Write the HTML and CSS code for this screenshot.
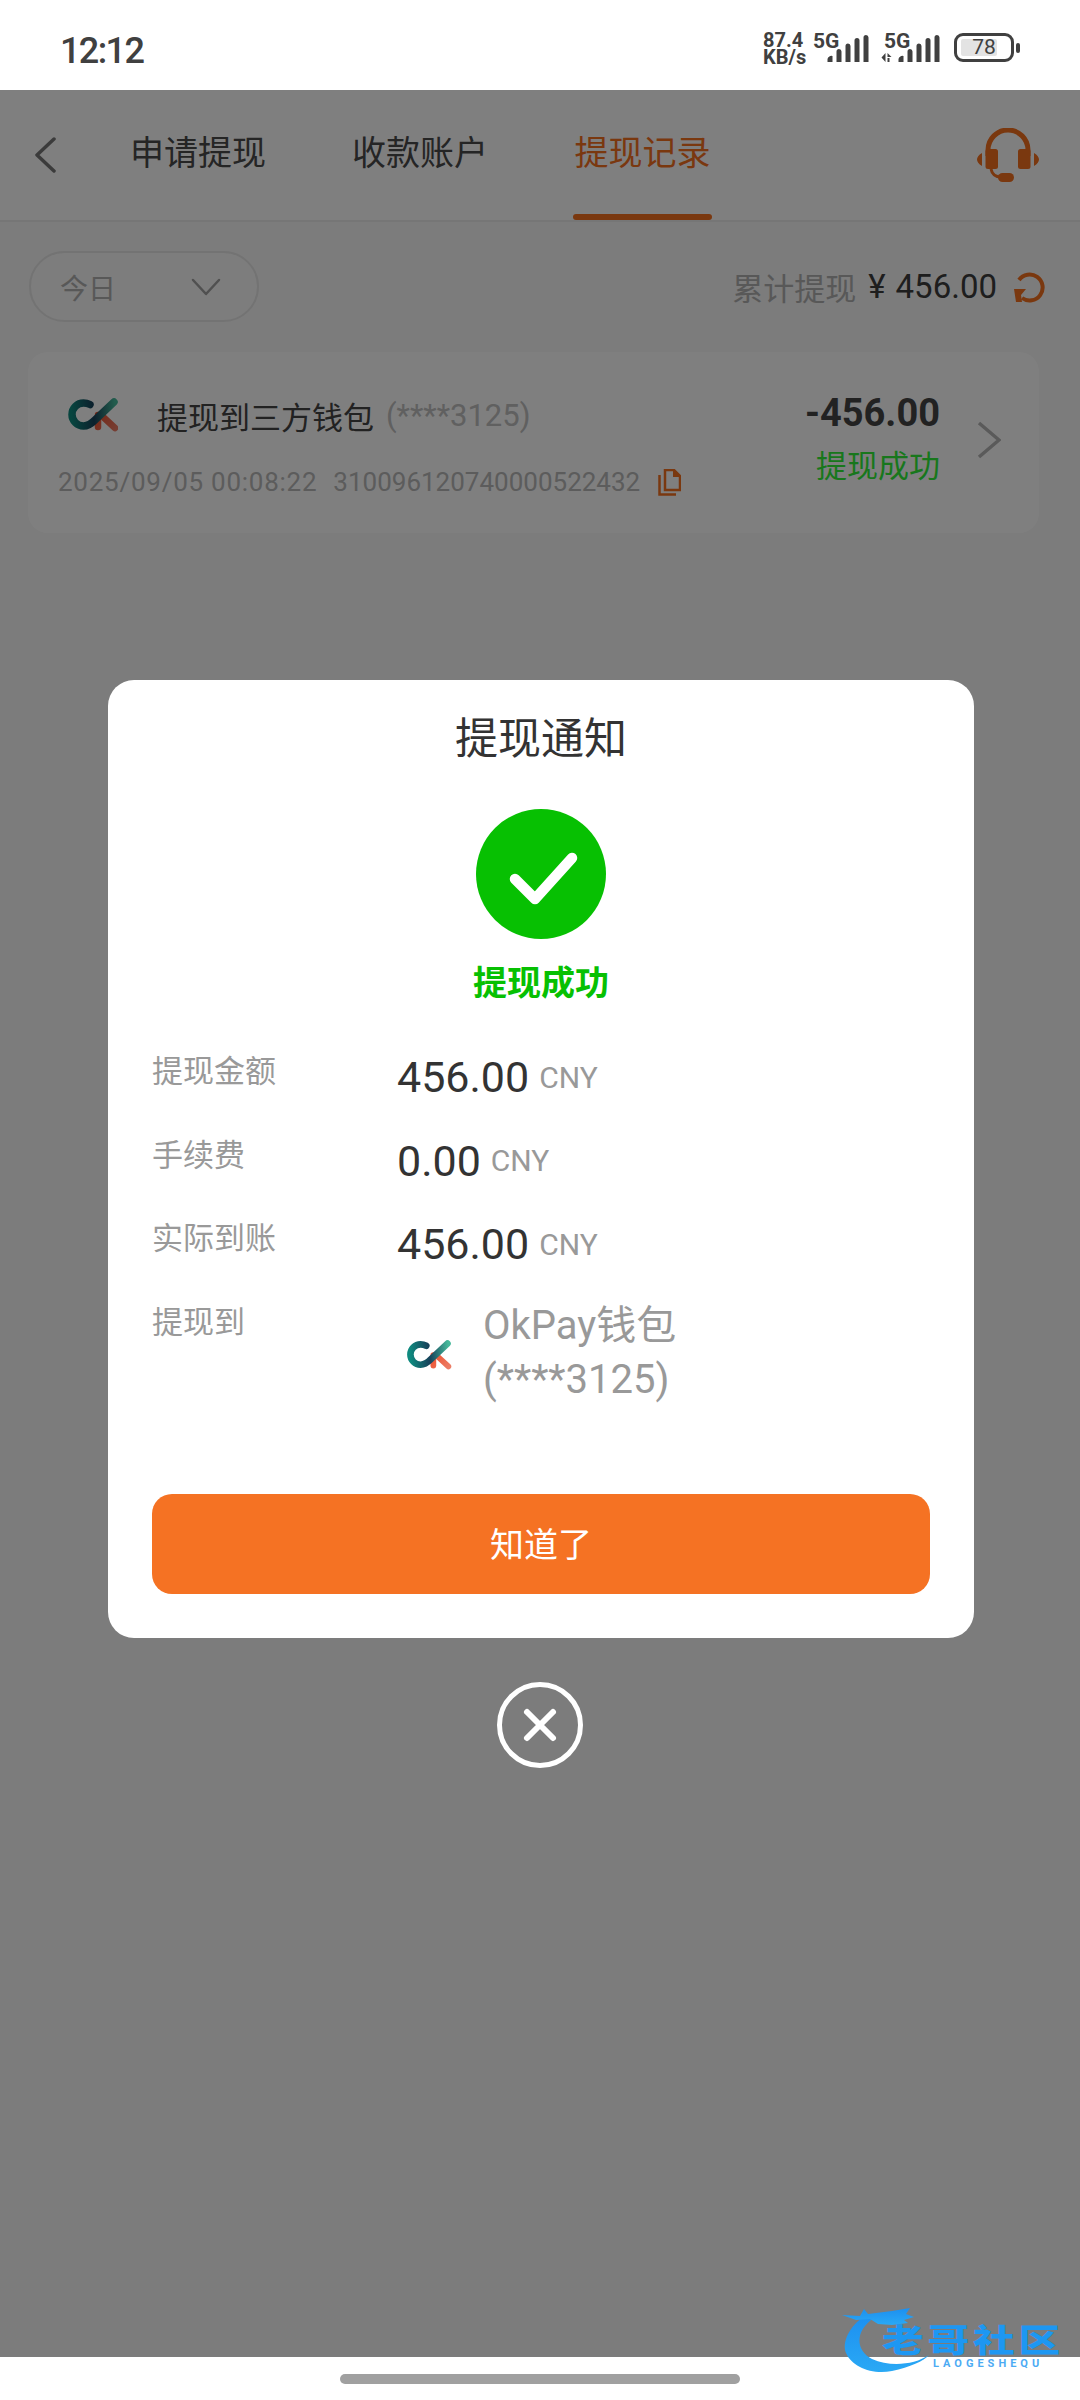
FILE: index.html
```html
<!DOCTYPE html>
<html lang="zh">
<head>
<meta charset="utf-8">
<title>提现记录</title>
<link rel="stylesheet" href="styles.css">
</head>
<body>
<svg class="defs" width="0" height="0" aria-hidden="true">
  <defs>
    <linearGradient id="ckC" gradientUnits="userSpaceOnUse" x1="4" y1="12" x2="48" y2="8">
      <stop offset="0" stop-color="#0f8a7f"/><stop offset="0.5" stop-color="#17415a"/><stop offset="1" stop-color="#45b89a"/>
    </linearGradient>
    <linearGradient id="ckR" gradientUnits="userSpaceOnUse" x1="30" y1="16" x2="48" y2="32">
      <stop offset="0" stop-color="#ee4f2c"/><stop offset="1" stop-color="#ec7d66"/>
    </linearGradient>
    <linearGradient id="wm" x1="0" y1="0" x2="0" y2="1">
      <stop offset="0" stop-color="#1c8ff0"/><stop offset="1" stop-color="#2aa9f5"/>
    </linearGradient>
    <symbol id="ck" viewBox="0 0 51 34">
      <path d="M31 17v12" stroke="url(#ckR)" stroke-width="6.500" stroke-linecap="round" fill="none"/>
      <path d="M34 17l14 13" stroke="url(#ckR)" stroke-width="6.500" stroke-linecap="round" fill="none"/>
      <path d="M23 6.500C20 5 18 5 16.500 5a11.500 11.500 0 0 0 0 23c5.500 0 8.500-3 11.500-6L47 4" stroke="url(#ckC)" stroke-width="7.500" stroke-linecap="round" fill="none"/>
    </symbol>
  </defs>
</svg>

<header class="status">
  <span class="clock">12:12</span>
  <div class="status-right">
    <span class="speed">87.4<br>KB/s</span>
    <span class="net">
      <span class="net-label">5G</span>
      <svg class="bars" viewBox="0 0 41 27"><path d="M0 27v-3a4 4 0 0 1 5-3v6zM9 27V16.500a2.500 2.500 0 0 1 5 0V27zM18 27V11a2.500 2.500 0 0 1 5 0v16zM27 27V5.500a2.500 2.500 0 0 1 5 0V27zM36 27V2.500a2.500 2.500 0 0 1 5 0V27z"/></svg>
    </span>
    <span class="net net-second">
      <span class="net-label">5G</span>
      <svg class="arrows" viewBox="0 0 11 9"><path d="M4 0v9L0 4.500zM6 0l4 4-4 0zM6 5h2v4H6z"/></svg>
      <svg class="bars" viewBox="0 0 41 27"><path d="M0 27v-3a4 4 0 0 1 5-3v6zM9 27V16.500a2.500 2.500 0 0 1 5 0V27zM18 27V11a2.500 2.500 0 0 1 5 0v16zM27 27V5.500a2.500 2.500 0 0 1 5 0V27zM36 27V2.500a2.500 2.500 0 0 1 5 0V27z"/></svg>
    </span>
    <span class="battery"><span class="battery-fill"></span><span class="battery-num">78</span></span>
    <span class="battery-nub"></span>
  </div>
</header>

<main class="app">
  <nav class="topbar">
    <svg class="back" viewBox="0 0 22 36"><path d="M20 2L3 18l17 16" fill="none" stroke="#777" stroke-width="3.500" stroke-linecap="round" stroke-linejoin="round"/></svg>
    <div class="tabs">
      <span class="tab">申请提现</span>
      <span class="tab">收款账户</span>
      <span class="tab tab-active">提现记录</span>
    </div>
    <svg class="headset" viewBox="0 0 62 54">
      <path d="M11 28v-6a20 20 0 0 1 40 0v6" fill="none" stroke="#f5701f" stroke-width="5"/>
      <rect x="8.500" y="21" width="12.500" height="20" rx="2.500" fill="#f5701f"/>
      <rect x="41" y="21" width="12.500" height="20" rx="2.500" fill="#f5701f"/>
      <path d="M5 25v13C1.500 36 0 33.500 0 31.500S1.500 27 5 25zM57 25v13c3.500-2 5-4.500 5-6.500S60.500 27 57 25z" fill="#f5701f"/>
      <path d="M14 41c1 5 4 8 10 8" fill="none" stroke="#f5701f" stroke-width="3"/>
      <rect x="21" y="45" width="16" height="9" rx="4.500" fill="#f5701f"/>
    </svg>
  </nav>

  <section class="filters">
    <div class="pill">
      <span class="pill-text">今日</span>
      <svg class="pill-arrow" viewBox="0 0 30 18"><path d="M2 2l13 14L28 2" fill="none" stroke="#a0a0a0" stroke-width="2.500" stroke-linecap="round" stroke-linejoin="round"/></svg>
    </div>
    <div class="total">
      <span class="total-label">累计提现</span>
      <span class="total-sum">¥</span>
      <span class="total-sum total-num">456.00</span>
      <svg class="refresh" viewBox="0 0 32 32"><path d="M6 9A13 13 0 1 1 9 27" fill="none" stroke="#f5701f" stroke-width="4"/><path d="M1 18h12l-5 6 1 7H3z" fill="#f5701f"/></svg>
    </div>
  </section>

  <article class="record">
    <div class="record-main">
      <div class="record-title">
        <svg class="logo"><use href="#ck"/></svg>
        <span class="record-name">提现到三方钱包</span>
        <span class="record-mask">(****3125)</span>
      </div>
      <div class="record-meta">
        <span class="record-date">2025/09/05 00:08:22</span>
        <span>310096120740000522432</span>
        <svg class="copy" viewBox="0 0 23 27"><path d="M7 1h9l6 6v14H7z" fill="none" stroke="#f5701f" stroke-width="2.500"/><path d="M15 1l7 7h-7z" fill="#f5701f"/><path d="M1.500 6v19.500H18" fill="none" stroke="#f5701f" stroke-width="2.500"/></svg>
      </div>
    </div>
    <div class="record-side">
      <span class="amount">-456.00</span>
      <span class="state">提现成功</span>
    </div>
    <svg class="next" viewBox="0 0 24 38"><path d="M2 2l20 17L2 36" fill="none" stroke="#b4b4b4" stroke-width="3.500"/></svg>
  </article>
</main>

<div class="scrim">
  <section class="dialog">
    <h1 class="dialog-title">提现通知</h1>
    <svg class="ok" viewBox="0 0 130 130"><circle cx="65" cy="65" r="65" fill="#07c002"/><path d="M39 70l20 20 37-41" fill="none" stroke="#fff" stroke-width="10.500" stroke-linecap="round" stroke-linejoin="round"/></svg>
    <p class="ok-text">提现成功</p>
    <dl class="rows">
      <div class="row"><dt>提现金额</dt><dd><span class="value">456.00</span><span class="unit">CNY</span></dd></div>
      <div class="row"><dt>手续费</dt><dd><span class="value">0.00</span><span class="unit">CNY</span></dd></div>
      <div class="row"><dt>实际到账</dt><dd><span class="value">456.00</span><span class="unit">CNY</span></dd></div>
      <div class="row"><dt>提现到</dt><dd class="wallet"><svg class="logo logo-dialog"><use href="#ck"/></svg><span class="wallet-name">OkPay钱包<br>(****3125)</span></dd></div>
    </dl>
    <button class="confirm" type="button">知道了</button>
  </section>
  <svg class="close" viewBox="0 0 86 86"><circle cx="43" cy="43" r="40.500" fill="none" stroke="#fff" stroke-width="5"/><path d="M30 30l26 26M56 30L30 56" stroke="#fff" stroke-width="6" stroke-linecap="round"/></svg>
</div>

<footer class="navbar"><span class="handle"></span></footer>

<div class="watermark">
  <svg class="dragon" viewBox="0 0 90 70">
    <path d="M24 10C6 22 0 38 4 48c6 14 26 22 46 18 18-4 32-10 37-16-15 10-39 12-57 4C14 46 12 26 32 13z" fill="url(#wm)"/>
    <path d="M0 10l18 1 4-7 4 5 24-3 18-3-4 6 8 3-10 3 4 3-16 2-14-1-8-5-14 1z" fill="url(#wm)"/>
  </svg>
  <span class="wm-title">老哥社区</span>
  <span class="wm-sub">LAOGESHEQU</span>
</div>
</body>
</html>
```

FILE: styles.css
```css
* { box-sizing: border-box; }
html, body { margin: 0; padding: 0; }
body {
  position: relative;
  width: 1080px;
  height: 2400px;
  overflow: hidden;
  display: flex;
  flex-direction: column;
  background: #fff;
  color: #333;
  font-family: Roboto, "Noto Sans CJK SC", sans-serif;
}
.defs { position: absolute; }

/* status bar */
.status {
  height: 90px;
  flex: none;
  display: flex;
  align-items: center;
  justify-content: space-between;
  padding: 12px 60px 0 60px;
  color: #404040;
}
.clock { font-size: 36px; letter-spacing: -1.600px; line-height: 1; font-weight: 500; }
.status-right { display: flex; align-items: flex-start; height: 40px; }
.speed {
  display: block;
  width: 50px;
  font-size: 20px;
  font-weight: 700;
  line-height: 17px;
  margin-top: 1px;
}
.net { position: relative; display: block; width: 71px; height: 36px; }
.net-second { width: 70px; }
.net-label { position: absolute; left: 0; top: 1px; font-size: 21px; line-height: 18px; font-weight: 700; }
.bars { position: absolute; left: 14px; top: 4px; width: 42px; height: 27px; fill: #404040; }
.arrows { position: absolute; left: -3px; top: 22px; width: 12px; height: 9px; fill: #404040; }
.battery {
  position: relative;
  display: block;
  width: 60px;
  height: 29px;
  margin-top: 2px;
  border: 3px solid #404040;
  border-radius: 9px;
}
.battery-fill { position: absolute; left: 4px; top: 3px; width: 36px; height: 17px; background: #e3e3e3; border-radius: 2px; }
.battery-num { position: absolute; left: 0; right: 0; top: 0; text-align: center; font-size: 21px; line-height: 23px; color: #404040; }
.battery-nub { width: 4px; height: 10px; background: #404040; border-radius: 2px; margin: 12px 0 0 2px; }

/* page under the scrim */
.app { flex: 1; background: #f8f8f8; }
.topbar {
  position: relative;
  height: 132px;
  display: flex;
  background: #fff;
  border-bottom: 2px solid #ececec;
}
.back { width: 22px; height: 36px; margin: 47px 0 0 34px; flex: none; }
.tabs { display: flex; margin-left: 74px; height: 130px; gap: 86px; }
.tab {
  font-size: 34px;
  line-height: 40px;
  padding-top: 43px;
  color: #4a4a4a;
  height: 130px;
  width: 136px;
  text-align: center;
  white-space: nowrap;
}
.tab-active {
  position: relative;
  margin-left: -1px;
  width: 139px;
  color: #f5701f;
}
.tab-active::after {
  content: "";
  position: absolute;
  left: 0;
  right: 0;
  bottom: 0;
  height: 6px;
  border-radius: 3px;
  background: #f5701f;
}
.headset { position: absolute; left: 977px; top: 38px; width: 62px; height: 54px; }

.filters {
  display: flex;
  justify-content: space-between;
  align-items: center;
  padding: 29px 35px 0 29px;
}
.pill {
  width: 230px;
  height: 71px;
  display: flex;
  align-items: center;
  justify-content: space-between;
  padding: 0 36px 0 29px;
  border: 2px solid #e6e6e6;
  border-radius: 36px;
  background: #fafafa;
}
.pill-text { font-size: 28px; color: #b0b0b0; }
.pill-arrow { width: 30px; height: 18px; }
.total { display: flex; align-items: center; }
.total-label { font-size: 31px; color: #b0b0b0; margin-right: 12px; }
.total-sum { font-size: 33px; color: #3c3c3c; }
.total-num { margin-left: 10px; }
.refresh { width: 32px; height: 32px; margin-left: 16px; }

.record {
  display: flex;
  align-items: flex-start;
  margin: 30px 41px 0 28px;
  height: 181px;
  background: #fff;
  border-radius: 20px;
  position: relative;
}
.record-main { flex: 1; padding: 42px 0 0 30px; }
.record-title { display: flex; align-items: center; height: 42px; padding-left: 9px; }
.logo { width: 51px; height: 34px; flex: none; }
.record-name { font-size: 31px; margin-left: 39px; color: #444; white-space: nowrap; }
.record-mask { font-size: 31px; margin-left: 12px; color: #c0c0c0; }
.record-meta {
  display: flex;
  align-items: center;
  gap: 16px;
  margin-top: 29px;
  font-size: 26px;
  line-height: 34px;
  color: #b8b8b8;
  white-space: nowrap;
}
.record-date { letter-spacing: 0.750px; }
.copy { width: 23px; height: 27px; margin-left: 2px; }
.record-side { width: 150px; display: flex; flex-direction: column; align-items: flex-end; padding-top: 37px; }
.amount { font-size: 38px; font-weight: 700; color: #444; line-height: 48px; }
.state { font-size: 31px; color: #30ee38; line-height: 40px; margin-top: 10px; }
.next { width: 24px; height: 38px; margin: 69px 38px 0 37px; flex: none; }

/* scrim and dialog */
.scrim {
  position: absolute;
  left: 0;
  right: 0;
  top: 90px;
  bottom: 43px;
  background: rgba(0, 0, 0, 0.5);
  display: flex;
  flex-direction: column;
  align-items: center;
  padding-top: 590px;
}
.dialog {
  width: 866px;
  height: 958px;
  margin-left: 2px;
  padding: 32px 44px 0;
  background: #fff;
  border-radius: 26px;
  display: flex;
  flex-direction: column;
  align-items: center;
}
.dialog-title { margin: 0; font-size: 43px; line-height: 54px; font-weight: 400; color: #333; }
.ok { width: 130px; height: 130px; margin-top: 43px; flex: none; }
.ok-text { margin: 22px 0 0; font-size: 34px; line-height: 44px; font-weight: 700; color: #07c002; }
.rows { align-self: stretch; margin: 39px 0 0; }
.row { display: flex; height: 83.500px; align-items: flex-start; }
.row dt { width: 245px; padding-top: 6px; font-size: 31px; line-height: 44px; color: #999; flex: none; }
.row dd { margin: 8px 0 0; display: flex; align-items: center; }
.value { font-size: 43px; line-height: 50px; color: #333; }
.unit { font-size: 30px; color: #999; margin-left: 10px; }
.row dd.wallet { margin: 4px 0 0; }
.logo-dialog { width: 47px; height: 30px; margin-left: 8px; margin-top: 4px; }
.wallet-name { font-size: 40px; line-height: 54px; color: #999; margin-left: 31px; white-space: nowrap; }
.confirm {
  align-self: stretch;
  height: 100px;
  margin-top: auto;
  margin-bottom: 44px;
  padding-bottom: 4px;
  border: 0;
  border-radius: 20px;
  background: #f57223;
  color: #fff;
  font-family: inherit;
  font-size: 34px;
}
.close { width: 86px; height: 86px; margin-top: 44px; flex: none; }

/* gesture bar */
.navbar { height: 43px; flex: none; display: flex; justify-content: center; padding-top: 17px; background: #fff; position: relative; }
.handle { width: 400px; height: 10px; border-radius: 5px; background: #a0a0a0; }

/* watermark */
.watermark { position: absolute; left: 842px; top: 2305px; width: 226px; height: 75px; color: #1d97f2; }
.dragon { position: absolute; left: 0; top: 0; width: 90px; height: 70px; }
.wm-title {
  position: absolute;
  left: 40px;
  top: 20px;
  font-size: 32px;
  line-height: 32px;
  font-weight: 900;
  letter-spacing: 3px;
  white-space: nowrap;
  transform: scaleX(1.300);
  transform-origin: left center;
}
.wm-sub { position: absolute; left: 91px; top: 53px; font-size: 11px; line-height: 11px; font-weight: 700; letter-spacing: 4px; opacity: .8; }
```
